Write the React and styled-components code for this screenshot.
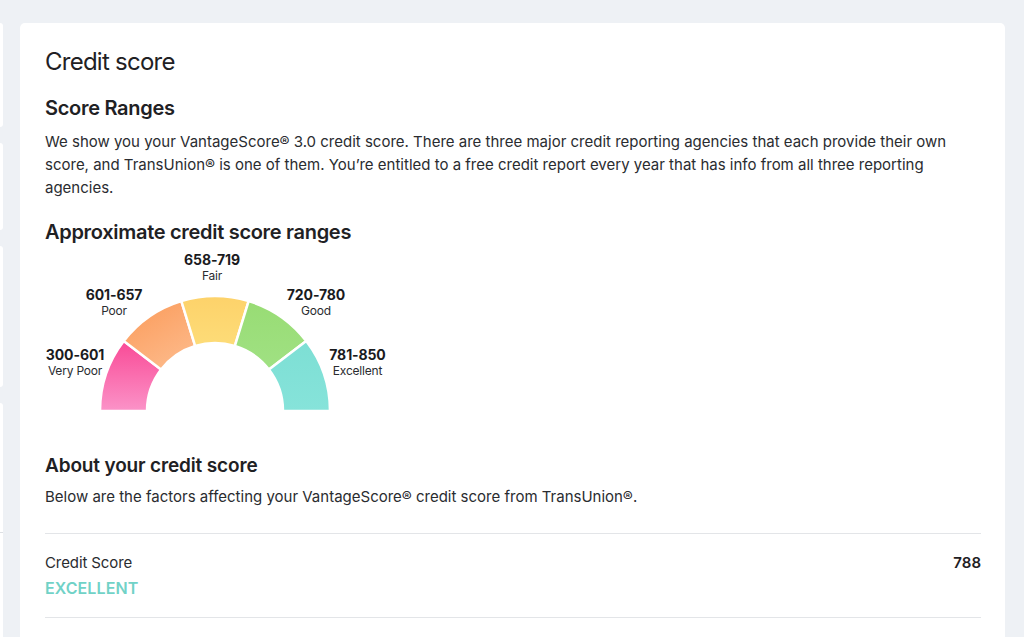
import React from "react";
import styled, { createGlobalStyle } from "styled-components";

const Global = createGlobalStyle`
  html, body { margin: 0; padding: 0; background: #eef1f5; }
  body { font-family: Inter, "Noto Sans", "Liberation Sans", sans-serif; color: #1f2124; }
  * { box-sizing: border-box; }
`;

const Page = styled.div`
  display: flex;
  gap: 17px;
  width: 1024px;
  height: 637px;
  overflow: hidden;
  padding: 23px 19px 0 0;
`;

const SideColumn = styled.div`
  width: 3px;
  display: flex;
  flex-direction: column;
  gap: 16px;
  flex-shrink: 0;
`;

const SideCard = styled.div`
  background: #fff;
  height: ${(p) => p.$h}px;
  flex-shrink: 0;
  border-radius: 0 4px 4px 0;
  display: flex;
  flex-direction: column;
`;

const SideSection = styled.div`
  height: ${(p) => p.$h}px;
  border-bottom: 1px solid #dde0e4;
`;

const Card = styled.main`
  flex: 1;
  background: #fff;
  border-radius: 5px 5px 0 0;
  padding: 24px 24px 0 25px;
  display: flex;
  flex-direction: column;
`;

const PageTitle = styled.h1`
  margin: 0;
  font-size: 24px;
  line-height: 30px;
  font-weight: 400;
  letter-spacing: -0.75px;
  color: #1f2124;
`;

const SectionTitle = styled.h2`
  margin: ${(p) => p.$mt || 0}px 0 0;
  font-size: ${(p) => p.$size || 20}px;
  line-height: 26px;
  font-weight: 600;
  letter-spacing: ${(p) => p.$ls ?? -0.3}px;
  color: #1f2124;
`;

const Para = styled.p`
  margin: ${(p) => p.$mt || 0}px 0 0;
  font-size: 15px;
  line-height: 23px;
  font-weight: 400;
  letter-spacing: 0;
  color: #2a2c30;
  max-width: 936px;
`;

const GaugeWrap = styled.div`
  position: relative;
  width: 345px;
  height: 160px;
  margin-top: 6px;
`;

const GaugeSvg = styled.svg`
  position: absolute;
  left: 10px;
  top: 34px;
`;

const Label = styled.div`
  position: absolute;
  left: ${(p) => p.$x}px;
  top: ${(p) => p.$y}px;
  transform: translateX(-50%);
  text-align: center;
  white-space: nowrap;
`;

const RangeNum = styled.div`
  font-size: 14px;
  line-height: 17px;
  font-weight: 700;
  letter-spacing: -0.1px;
  color: #1a1b1e;
`;

const RangeName = styled.div`
  font-size: 12px;
  line-height: 16px;
  font-weight: 400;
  letter-spacing: -0.2px;
  color: #2a2c30;
`;

const Divider = styled.hr`
  margin: ${(p) => p.$mt || 0}px 0 0;
  border: none;
  border-top: 1px solid #e3e5e8;
  width: 100%;
`;

const ScoreRow = styled.div`
  display: flex;
  justify-content: space-between;
  align-items: flex-start;
  padding: 18px 0 18px;
`;

const ScoreLeft = styled.div`
  display: flex;
  flex-direction: column;
  gap: 3px;
`;

const ScoreLabel = styled.div`
  font-size: 15px;
  line-height: 22px;
  color: #2a2c30;
  letter-spacing: -0.1px;
`;

const ScoreGrade = styled.div`
  font-size: 16px;
  line-height: 22px;
  font-weight: 600;
  color: #71d2c7;
  letter-spacing: 0.1px;
`;

const ScoreValue = styled.div`
  font-size: 15px;
  line-height: 22px;
  font-weight: 600;
  color: #1f2124;
`;

const CX = 160;
const CY = 126;
const R = 115;
const RI = 68;

function pt(r, deg) {
  const a = (Math.PI * deg) / 180;
  return [CX - r * Math.cos(a), CY - r * Math.sin(a)];
}

function seg(a0, a1) {
  const [x0, y0] = pt(R, a0);
  const [x1, y1] = pt(R, a1);
  const [x2, y2] = pt(RI, a1);
  const [x3, y3] = pt(RI, a0);
  return `M${x0} ${y0} A${R} ${R} 0 0 1 ${x1} ${y1} L${x2} ${y2} A${RI} ${RI} 0 0 0 ${x3} ${y3} Z`;
}

const segments = [
  { a0: 0, a1: 37.5, g: "gPink" },
  { a0: 37.5, a1: 73, g: "gOrange" },
  { a0: 73, a1: 107, g: "gYellow" },
  { a0: 107, a1: 142.5, g: "gGreen" },
  { a0: 142.5, a1: 180, g: "gTeal" },
];

const labels = [
  { x: 30, y: 95, n: "300-601", t: "Very Poor" },
  { x: 69, y: 35, n: "601-657", t: "Poor" },
  { x: 167, y: 0, n: "658-719", t: "Fair" },
  { x: 271, y: 35, n: "720-780", t: "Good" },
  { x: 312.5, y: 95, n: "781-850", t: "Excellent" },
];

function Gauge() {
  return (
    <GaugeWrap>
      <GaugeSvg width="320" height="128" viewBox="0 0 320 128">
        <defs>
          <linearGradient id="gPink" x1="0" y1="0" x2="0" y2="1">
            <stop offset="0" stopColor="#f94a96" />
            <stop offset="1" stopColor="#fb93c8" />
          </linearGradient>
          <linearGradient id="gOrange" x1="0.2" y1="0" x2="0.8" y2="1">
            <stop offset="0" stopColor="#fb9c5c" />
            <stop offset="1" stopColor="#fdbb8c" />
          </linearGradient>
          <linearGradient id="gYellow" x1="0" y1="0" x2="0" y2="1">
            <stop offset="0" stopColor="#fdd26a" />
            <stop offset="1" stopColor="#fddc78" />
          </linearGradient>
          <linearGradient id="gGreen" x1="0" y1="0" x2="0" y2="1">
            <stop offset="0" stopColor="#98dc74" />
            <stop offset="1" stopColor="#a0e183" />
          </linearGradient>
          <linearGradient id="gTeal" x1="0" y1="0" x2="0" y2="1">
            <stop offset="0" stopColor="#7ddfd4" />
            <stop offset="1" stopColor="#86e3da" />
          </linearGradient>
        </defs>
        {segments.map((s) => (
          <path
            key={s.g}
            d={seg(s.a0, s.a1)}
            fill={`url(#${s.g})`}
            stroke="#ffffff"
            strokeWidth="2.5"
            strokeLinejoin="round"
          />
        ))}
      </GaugeSvg>
      {labels.map((l) => (
        <Label key={l.n} $x={l.x} $y={l.y}>
          <RangeNum>{l.n}</RangeNum>
          <RangeName>{l.t}</RangeName>
        </Label>
      ))}
    </GaugeWrap>
  );
}

export default function App() {
  return (
    <>
      <Global />
      <Page>
        <SideColumn>
          <SideCard $h={104} />
          <SideCard $h={87} />
          <SideCard $h={141} />
          <SideCard $h={240}>
            <SideSection $h={130} />
          </SideCard>
        </SideColumn>
        <Card>
          <PageTitle>Credit score</PageTitle>
          <SectionTitle $mt={18}>Score Ranges</SectionTitle>
          <Para $mt={9}>
            We show you your VantageScore® 3.0 credit score. There are three major credit
            reporting agencies that each provide their own score, and TransUnion® is one of
            them. You’re entitled to a free credit report every year that has info from all
            three reporting agencies.
          </Para>
          <SectionTitle $mt={20} $size={20}>Approximate credit score ranges</SectionTitle>
          <Gauge />
          <SectionTitle $mt={42} $size={19} $ls={-0.15}>About your credit score</SectionTitle>
          <Para $mt={6}>
            Below are the factors affecting your VantageScore® credit score from TransUnion®.
          </Para>
          <Divider $mt={25} />
          <ScoreRow>
            <ScoreLeft>
              <ScoreLabel>Credit Score</ScoreLabel>
              <ScoreGrade>EXCELLENT</ScoreGrade>
            </ScoreLeft>
            <ScoreValue>788</ScoreValue>
          </ScoreRow>
          <Divider />
        </Card>
      </Page>
    </>
  );
}
